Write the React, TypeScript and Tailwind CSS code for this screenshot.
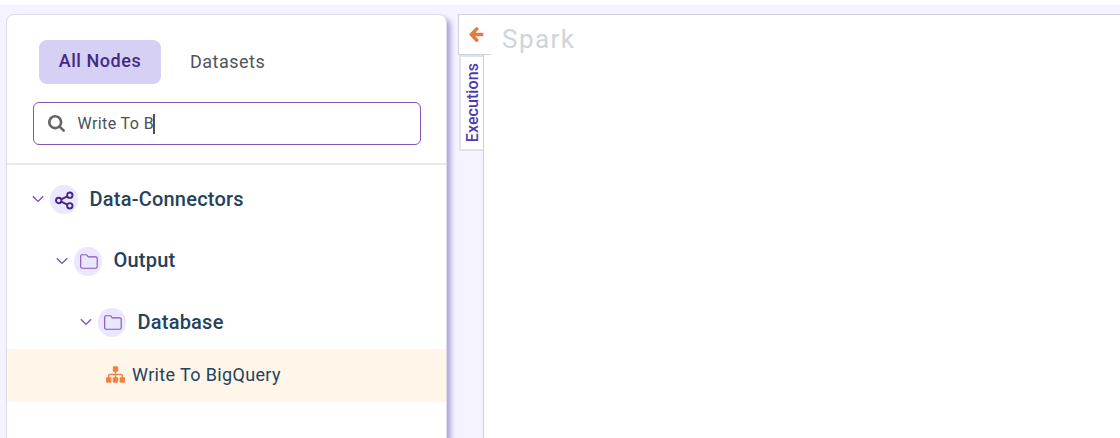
import type { ReactNode } from "react";

function Chevron() {
  return (
    <svg className="h-[8px] w-[12px] shrink-0" viewBox="0 0 12 8" fill="none" stroke="#7b4fb8" strokeWidth="1.35">
      <path d="M.8 1.200 6 6.400l5.200-5.200" />
    </svg>
  );
}

function Folder() {
  return (
    <svg className="mb-px ml-px h-[15px] w-[18px]" viewBox="0 0 18 15" fill="none" stroke="#8255bd" strokeWidth="1.15" strokeLinejoin="round">
      <path d="M.7 12.700V1.900Q.7.700 1.900.700h4.300q.6 0 .9.500l1 1.600h7.600q1.500 0 1.500 1.400v8.500q0 1.500-1.500 1.500H2.200Q.7 14.200.7 12.700Z" />
    </svg>
  );
}

function Share() {
  return (
    <svg className="mt-px ml-px h-[19px] w-[19px]" viewBox="0 0 19 19" fill="none" stroke="#432788" strokeWidth="1.9">
      <circle cx="3.700" cy="9.500" r="2.700" />
      <circle cx="14.800" cy="4.200" r="2.700" />
      <circle cx="14.800" cy="14.800" r="2.700" />
      <path d="m6.200 8.300 6.100-2.900M6.200 10.700l6.100 2.900" />
    </svg>
  );
}

function Search() {
  return (
    <svg className="h-[17px] w-[17px] shrink-0" viewBox="64 128 1664 1664" fill="#666">
      <path d="M1216 832q0-185-131.500-316.500t-316.500-131.500-316.500 131.500-131.500 316.500 131.500 316.500 316.500 131.500 316.500-131.500 131.500-316.500zM1728 1664q0 52-38 90t-90 38q-54 0-90-38l-343-342q-179 124-399 124-143 0-273.500-55.500t-225-150-150-225-55.500-273.500 55.500-273.500 150-225 225-150 273.500-55.500 273.500 55.500 225 150 150 225 55.500 273.500q0 220-124 399l343 343q37 37 37 90z" />
    </svg>
  );
}

function ArrowLeft() {
  return (
    <svg className="ml-px h-[17px] w-[16px]" viewBox="64 128 1664 1664" fill="#e47b43">
      <path d="M1664 896v128q0 53-32.500 90.500t-84.500 37.500h-704l293 294q38 36 38 90t-38 90l-75 76q-37 37-90 37-52 0-91-37l-651-652q-37-37-37-90 0-52 37-91l651-650q38-38 91-38 52 0 90 38l75 74q38 38 38 91t-38 91l-293 293h704q52 0 84.500 37.500t32.500 90.500z" />
    </svg>
  );
}

function Sitemap() {
  return (
    <svg className="mb-[3px] h-[19px] w-[19px] shrink-0" viewBox="0 0 1792 1792" fill="#f4803f">
      <path d="M1792 1248v320q0 40-28 68t-68 28h-320q-40 0-68-28t-28-68v-320q0-40 28-68t68-28h96v-192h-512v192h96q40 0 68 28t28 68v320q0 40-28 68t-68 28h-320q-40 0-68-28t-28-68v-320q0-40 28-68t68-28h96v-192h-512v192h96q40 0 68 28t28 68v320q0 40-28 68t-68 28h-320q-40 0-68-28t-28-68v-320q0-40 28-68t68-28h96v-192q0-52 38-90t90-38h512v-192h-96q-40 0-68-28t-28-68v-320q0-40 28-68t68-28h320q40 0 68 28t28 68v320q0 40-28 68t-68 28h-96v192h512q52 0 90 38t38 90v192h96q40 0 68 28t28 68z" />
    </svg>
  );
}

function TreeRow({ icon, label, indent, lift = "" }: { icon: ReactNode; label: string; indent: string; lift?: string }) {
  return (
    <div className={`flex h-[29px] items-center ${indent}`}>
      <span className="pb-[2px]">
        <Chevron />
      </span>
      <span className="ml-[6px] flex h-[29px] w-[28px] items-center justify-center rounded-full bg-[#ebe7ff]">{icon}</span>
      <span className={`ml-[11.5px] text-[20px] leading-[27px] font-medium tracking-[0.22px] text-[#24425c] ${lift}`}>{label}</span>
    </div>
  );
}

export default function App() {
  return (
    <div className="flex h-[438px] flex-col overflow-hidden bg-[#f5f3ff] font-['Roboto',sans-serif]">
      <div className="h-[5px] shrink-0 bg-white" />
      <div className="flex min-h-0 flex-1 pt-[9px] pl-[6px]">
        <aside className="-mb-5 w-[441px] shrink-0 rounded-t-[8px] border border-[#dcdde8] bg-white shadow-[4px_4px_5px_#b0a8dc]">
          <div className="flex h-[150px] flex-col border-b-2 border-[#e6eaed] pt-[25px]">
            <div className="ml-[32px] flex h-[44px] text-[18px] leading-[42px] tracking-[0.55px]">
              <button className="w-[122px] rounded-[8px] bg-[#d6d0f5] pb-[2px] font-medium text-[#432a85]">All Nodes</button>
              <button className="ml-[29px] tracking-[0.5px] text-[#505459]">Datasets</button>
            </div>
            <label className="mt-[18px] ml-[26px] flex h-[43px] w-[388px] items-center rounded-[6px] border border-[#7e55b8] pl-[14px]">
              <Search />
              <span className="ml-[12.5px] text-[16px] tracking-[0.4px] text-[#495057]">Write To B</span>
              <span className="-ml-[1.5px] h-[20px] w-[2px] bg-[#495057]" />
            </label>
          </div>
          <div className="pt-[20px]">
            <TreeRow icon={<Share />} label="Data-Connectors" indent="pl-[25px]" />
            <div className="h-[33px]" />
            <TreeRow icon={<Folder />} label="Output" indent="pl-[49px]" lift="pb-[2px]" />
            <div className="h-[32px]" />
            <TreeRow icon={<Folder />} label="Database" indent="pl-[73px]" />
            <div className="mt-[12px] flex h-[53px] items-center bg-[#fff6e9] pl-[99px] text-[18px] tracking-[0.36px] text-[#24425c]">
              <Sitemap />
              <span className="ml-[7px] pb-[2px]">Write To BigQuery</span>
            </div>
          </div>
        </aside>
        <main className="ml-[11px] flex min-w-0 flex-1">
          <div className="flex w-[25px] shrink-0 flex-col">
            <div className="relative z-10 flex h-[41px] w-[33px] items-center justify-center border border-r-0 border-[#cfd3da] bg-white">
              <ArrowLeft />
            </div>
            <div className="ml-px flex h-[96px] w-[24px] items-center justify-center border-2 border-r-0 border-[#e0e4e8] bg-white pl-[2px]">
              <span className="rotate-180 text-[16px] leading-[20px] font-medium tracking-[0.08px] text-[#4b3eaa] [writing-mode:vertical-rl]">Executions</span>
            </div>
          </div>
          <section className="min-w-0 flex-1 border-t border-l border-[#cdcfdb] bg-white pt-[7px] pl-[18px] text-[26px] leading-[35px] tracking-[1.45px] text-[#cfd4da]">
            Spark
          </section>
        </main>
      </div>
    </div>
  );
}
